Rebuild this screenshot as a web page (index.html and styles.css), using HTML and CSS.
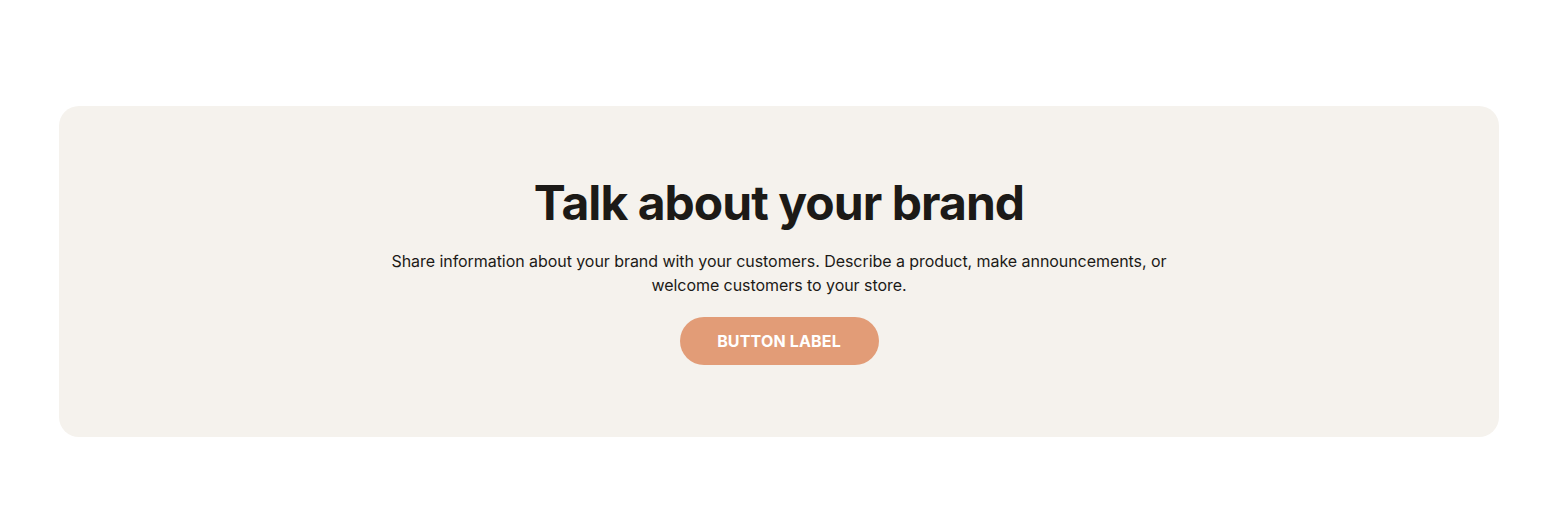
FILE: index.html
```html
<!DOCTYPE html>
<html lang="en">
<head>
<meta charset="utf-8">
<title>Talk about your brand</title>
<link rel="stylesheet" href="styles.css">
</head>
<body>
<section class="page">
  <div class="banner">
    <h2 class="banner-title">Talk about your brand</h2>
    <p class="banner-text">Share information about your brand with your customers. Describe a product, make announcements, or welcome customers to your store.</p>
    <a class="banner-button" href="#">BUTTON LABEL</a>
  </div>
</section>
</body>
</html>
```
FILE: styles.css
```css
* { box-sizing: border-box; }
html, body { margin: 0; padding: 0; background: #ffffff; }
body { font-family: Inter, "Liberation Sans", sans-serif; color: #1c1a17; }
.page {
  padding: 106px 0 91px 59px;
}
.banner {
  width: 1440px;
  background: #f5f2ed;
  border-radius: 20px;
  padding: 72px 32px 72px;
  display: flex;
  flex-direction: column;
  align-items: center;
  text-align: center;
}
.banner-title {
  margin: 0;
  font-size: 48px;
  font-weight: 700;
  letter-spacing: -0.02em;
  line-height: 50px;
  color: #1c1a17;
}
.banner-text {
  margin: 21px 0 0;
  max-width: 790px;
  font-size: 16px;
  line-height: 24px;
  letter-spacing: -0.06px;
  color: #1c1a17;
}
.banner-button {
  margin-top: 20px;
  display: inline-flex;
  align-items: center;
  justify-content: center;
  width: 199px;
  height: 48px;
  border-radius: 24px;
  background: #e29c77;
  color: #ffffff;
  font-size: 16px;
  font-weight: 700;
  letter-spacing: 0.01em;
  text-decoration: none;
}
```
